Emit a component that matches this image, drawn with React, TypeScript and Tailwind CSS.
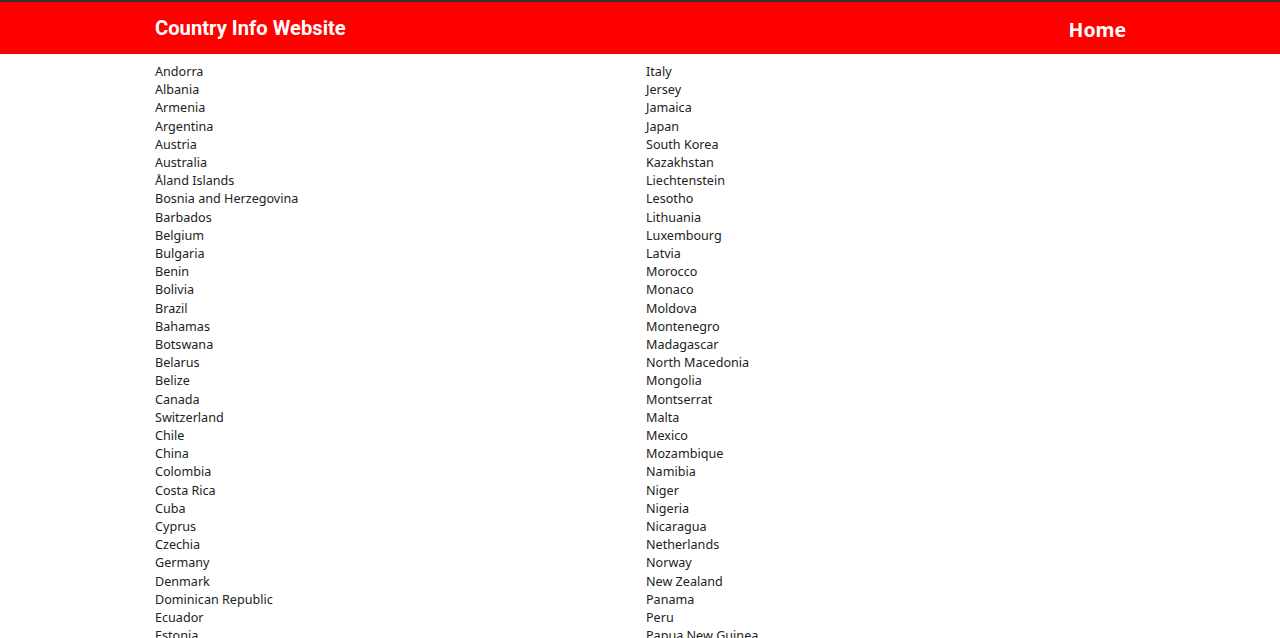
const left = [
  "Andorra",
  "Albania",
  "Armenia",
  "Argentina",
  "Austria",
  "Australia",
  "Åland Islands",
  "Bosnia and Herzegovina",
  "Barbados",
  "Belgium",
  "Bulgaria",
  "Benin",
  "Bolivia",
  "Brazil",
  "Bahamas",
  "Botswana",
  "Belarus",
  "Belize",
  "Canada",
  "Switzerland",
  "Chile",
  "China",
  "Colombia",
  "Costa Rica",
  "Cuba",
  "Cyprus",
  "Czechia",
  "Germany",
  "Denmark",
  "Dominican Republic",
  "Ecuador",
  "Estonia",
  "Egypt",
  "Spain",
  "Finland",
  "France",
];

const right = [
  "Italy",
  "Jersey",
  "Jamaica",
  "Japan",
  "South Korea",
  "Kazakhstan",
  "Liechtenstein",
  "Lesotho",
  "Lithuania",
  "Luxembourg",
  "Latvia",
  "Morocco",
  "Monaco",
  "Moldova",
  "Montenegro",
  "Madagascar",
  "North Macedonia",
  "Mongolia",
  "Montserrat",
  "Malta",
  "Mexico",
  "Mozambique",
  "Namibia",
  "Niger",
  "Nigeria",
  "Nicaragua",
  "Netherlands",
  "Norway",
  "New Zealand",
  "Panama",
  "Peru",
  "Papua New Guinea",
  "Poland",
  "Puerto Rico",
  "Portugal",
  "Paraguay",
];

function Column({ items }: { items: string[] }) {
  return (
    <ul className="flex flex-col">
      {items.map((name) => (
        <li key={name} className="cursor-pointer leading-[18.2px]">
          {name}
        </li>
      ))}
    </ul>
  );
}

export default function App() {
  return (
    <div className="min-h-screen bg-white">
      <header className="border-t-2 border-[#333333] bg-[#ff0000]">
        <div className="mx-auto flex h-[52px] w-[970px] items-center justify-between">
          <h1 className="font-['Roboto',sans-serif] text-[20.2px] font-bold text-white">
            Country Info Website
          </h1>
          <a className="mr-[-1px] mt-[3px] font-['Noto_Sans',sans-serif] text-[19.4px] font-bold text-white">
            Home
          </a>
        </div>
      </header>
      <main className="mx-auto grid w-[970px] grid-cols-2 gap-x-3 pt-[9px] font-['Noto_Sans',sans-serif] text-[12.6px] text-[#222222]">
        <Column items={left} />
        <Column items={right} />
      </main>
    </div>
  );
}
